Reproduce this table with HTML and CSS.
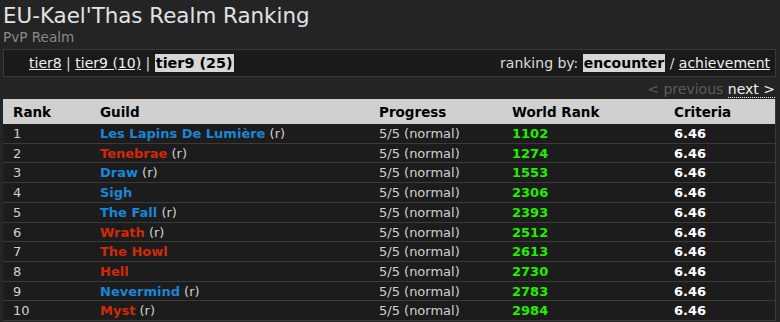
FILE: index.html
```html
<!DOCTYPE html>
<html>
<head>
<meta charset="utf-8">
<link rel="stylesheet" href="styles.css">
</head>
<body>
<div class="page">
  <h1 class="title">EU-Kael'Thas Realm Ranking</h1>
  <div class="subtitle">PvP Realm</div>
  <div class="navbar">
    <div class="tiers">
      <a href="#" class="lnk">tier8</a> | <a href="#" class="lnk">tier9 (10)</a> | <span class="sel">tier9 (25)</span>
    </div>
    <div class="rankby">
      ranking by: <span class="sel">encounter</span> / <a href="#" class="lnk">achievement</a>
    </div>
  </div>
  <div class="pager"><span class="prev">&lt; previous</span> <a href="#" class="next">next &gt;</a></div>
  <table class="ranking">
    <thead>
      <tr><th class="c-rank">Rank</th><th class="c-guild">Guild</th><th class="c-prog">Progress</th><th class="c-world">World Rank</th><th class="c-crit">Criteria</th></tr>
    </thead>
    <tbody>
      <tr><td>1</td><td><span class="g blue">Les Lapins De Lumière</span> (r)</td><td>5/5 (normal)</td><td class="wr">1102</td><td class="cr">6.46</td></tr>
      <tr><td>2</td><td><span class="g red">Tenebrae</span> (r)</td><td>5/5 (normal)</td><td class="wr">1274</td><td class="cr">6.46</td></tr>
      <tr><td>3</td><td><span class="g blue">Draw</span> (r)</td><td>5/5 (normal)</td><td class="wr">1553</td><td class="cr">6.46</td></tr>
      <tr><td>4</td><td><span class="g blue">Sigh</span></td><td>5/5 (normal)</td><td class="wr">2306</td><td class="cr">6.46</td></tr>
      <tr><td>5</td><td><span class="g blue">The Fall</span> (r)</td><td>5/5 (normal)</td><td class="wr">2393</td><td class="cr">6.46</td></tr>
      <tr><td>6</td><td><span class="g red">Wrath</span> (r)</td><td>5/5 (normal)</td><td class="wr">2512</td><td class="cr">6.46</td></tr>
      <tr><td>7</td><td><span class="g red">The Howl</span></td><td>5/5 (normal)</td><td class="wr">2613</td><td class="cr">6.46</td></tr>
      <tr><td>8</td><td><span class="g red">Hell</span></td><td>5/5 (normal)</td><td class="wr">2730</td><td class="cr">6.46</td></tr>
      <tr><td>9</td><td><span class="g blue">Nevermind</span> (r)</td><td>5/5 (normal)</td><td class="wr">2783</td><td class="cr">6.46</td></tr>
      <tr><td>10</td><td><span class="g red">Myst</span> (r)</td><td>5/5 (normal)</td><td class="wr">2984</td><td class="cr">6.46</td></tr>
    </tbody>
  </table>
</div>
</body>
</html>
```

FILE: styles.css
```css
html, body {
  margin: 0;
  padding: 0;
  background: #242424;
}
body {
  font-family: "DejaVu Sans", Verdana, sans-serif;
  font-size: 13px;
  color: #d8d8d8;
}
.page {
  padding: 0 4px 0 3px;
}
.title {
  margin: 0;
  padding-top: 3px;
  font-size: 21.4px;
  font-weight: normal;
  line-height: 25px;
  color: #e2e2e2;
}
.subtitle {
  color: #8a8a8a;
  font-size: 13.6px;
  line-height: 18px;
}
.navbar {
  margin-top: 3px;
  height: 26px;
  border: 1px solid #3a3a3a;
  background: #1a1a1a;
  display: flex;
  justify-content: space-between;
  align-items: center;
  padding: 0 5px 0 25px;
  color: #dcdcdc;
  font-size: 14px;
}
.lnk {
  color: #f0f0f0;
  text-decoration: underline;
}
.sel {
  background: #d6d6d6;
  color: #000;
  font-weight: bold;
  padding: 1px 1px;
}
.tiers .sel {
  font-size: 14.4px;
}
.pager {
  text-align: right;
  height: 20px;
  line-height: 20px;
  padding-right: 1px;
  margin-top: 2px;
  font-size: 14px;
}
.prev {
  color: #5c5c5c;
}
.next {
  color: #f0f0f0;
  text-decoration: none;
  border-bottom: 1px dotted #f0f0f0;
}
.ranking {
  width: 773px;
  border-collapse: collapse;
  border-right: 1px solid #3a3a3a;
}
.ranking th {
  background: #d0d0d0;
  color: #000;
  font-weight: bold;
  text-align: left;
  height: 25px;
  padding: 0;
  font-size: 13.5px;
}
.ranking td {
  background: #1c1c1c;
  border-bottom: 1px solid #3a3a3a;
  padding: 1px 0 0;
  line-height: 17.7px;
  color: #d0d0d0;
}
.ranking th:first-child, .ranking td:first-child {
  padding-left: 10px;
  width: 87px;
}
.c-guild { width: 279px; }
.c-prog { width: 133px; }
.c-world { width: 162px; }
.g { font-weight: bold; }
.blue { color: #1a86d8; }
.red { color: #d22a06; }
.ranking td.wr { color: #22ee00; font-weight: bold; }
.ranking td.cr { color: #ffffff; font-weight: bold; }
```
